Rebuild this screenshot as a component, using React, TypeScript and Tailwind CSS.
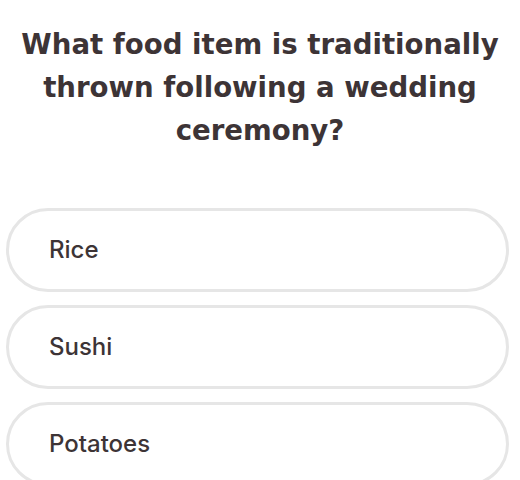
export default function App() {
  const opts = ["Rice", "Sushi", "Potatoes"];
  return (
    <div className="w-[520px] h-[480px] overflow-hidden bg-white" style={{ fontFamily: "'DejaVu Sans', sans-serif" }}>
      <h1 className="pt-[23px] text-center text-[27.6px] leading-[43px] font-bold text-[#3d3436]">
        What food item is traditionally<br />thrown following a wedding<br />ceremony?
      </h1>
      <div className="mt-[56px] ml-[6px] w-[503px] flex flex-col gap-[13px]">
        {opts.map((o) => (
          <div key={o} className="h-[84px] shrink-0 rounded-[42px] border-[3px] border-[#e6e6e6] flex items-center pl-[40px] text-[24px] font-medium text-[#3d3436]" style={{ fontFamily: "Inter, sans-serif" }}>
            {o}
          </div>
        ))}
      </div>
    </div>
  );
}
